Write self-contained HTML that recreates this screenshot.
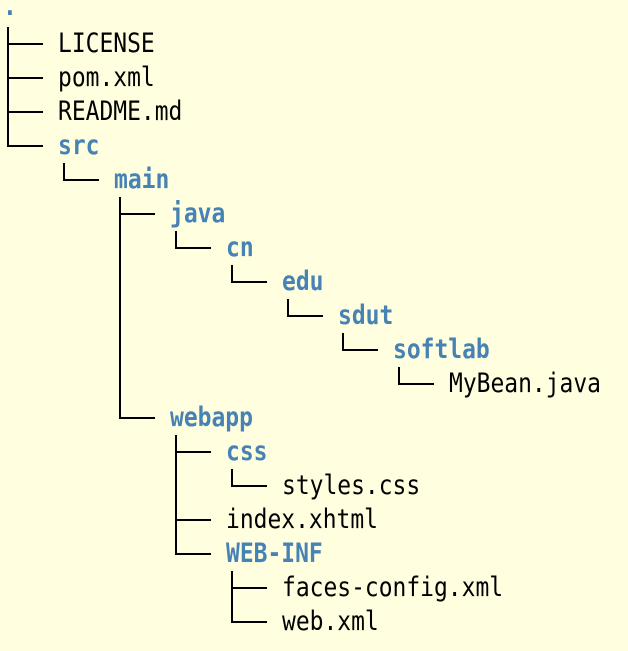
<!DOCTYPE html>
<html><head><meta charset="utf-8"><style>
html,body{margin:0;padding:0}
body{width:628px;height:651px;background:#ffffe0;position:relative;overflow:hidden;font-family:"DejaVu Sans Mono","Liberation Mono",monospace;font-size:27px;color:#000}
.t{position:absolute;white-space:pre;line-height:34px;height:34px;transform:scaleX(0.85);transform-origin:0 50%}
.d{color:#4682b4;font-weight:bold}
.l{position:absolute;background:#000}
</style></head><body>
<div id="root"></div>
<script>
var rows=[
[-1,'.',1],[0,'LICENSE',0],[0,'pom.xml',0],[0,'README.md',0],[0,'src',1],
[1,'main',1],[2,'java',1],[3,'cn',1],[4,'edu',1],[5,'sdut',1],[6,'softlab',1],
[7,'MyBean.java',0],[2,'webapp',1],[3,'css',1],[4,'styles.css',0],[3,'index.xhtml',0],
[3,'WEB-INF',1],[4,'faces-config.xml',0],[4,'web.xml',0]];
var S=55.9,h='';
function cy(i){return 10+34*i;}
function tx(d){return d<0?3:Math.round(58+S*d);}
function vx(d){return Math.round(8+S*d);}
for(var i=0;i<rows.length;i++){
 var r=rows[i],d=r[0];
 h+='<div class="t'+(r[2]?' d':'')+'" style="left:'+tx(d)+'px;top:'+(cy(i)-17+(i==0?-3:0))+'px">'+r[1]+'</div>';
 if(d>=0){
  h+='<div class="l" style="left:'+(vx(d)-1)+'px;top:'+(cy(i)-1)+'px;width:36px;height:2px"></div>';
 }
 var last=-1;
 for(var j=i+1;j<rows.length&&rows[j][0]>d;j++){if(rows[j][0]==d+1)last=j;}
 if(last>0){
  var x=vx(d+1),y0=cy(i)+17,y1=cy(last)+1;
  h+='<div class="l" style="left:'+(x-1)+'px;top:'+y0+'px;width:2px;height:'+(y1-y0)+'px"></div>';
 }
}
document.getElementById('root').innerHTML=h;
</script>
</body></html>
